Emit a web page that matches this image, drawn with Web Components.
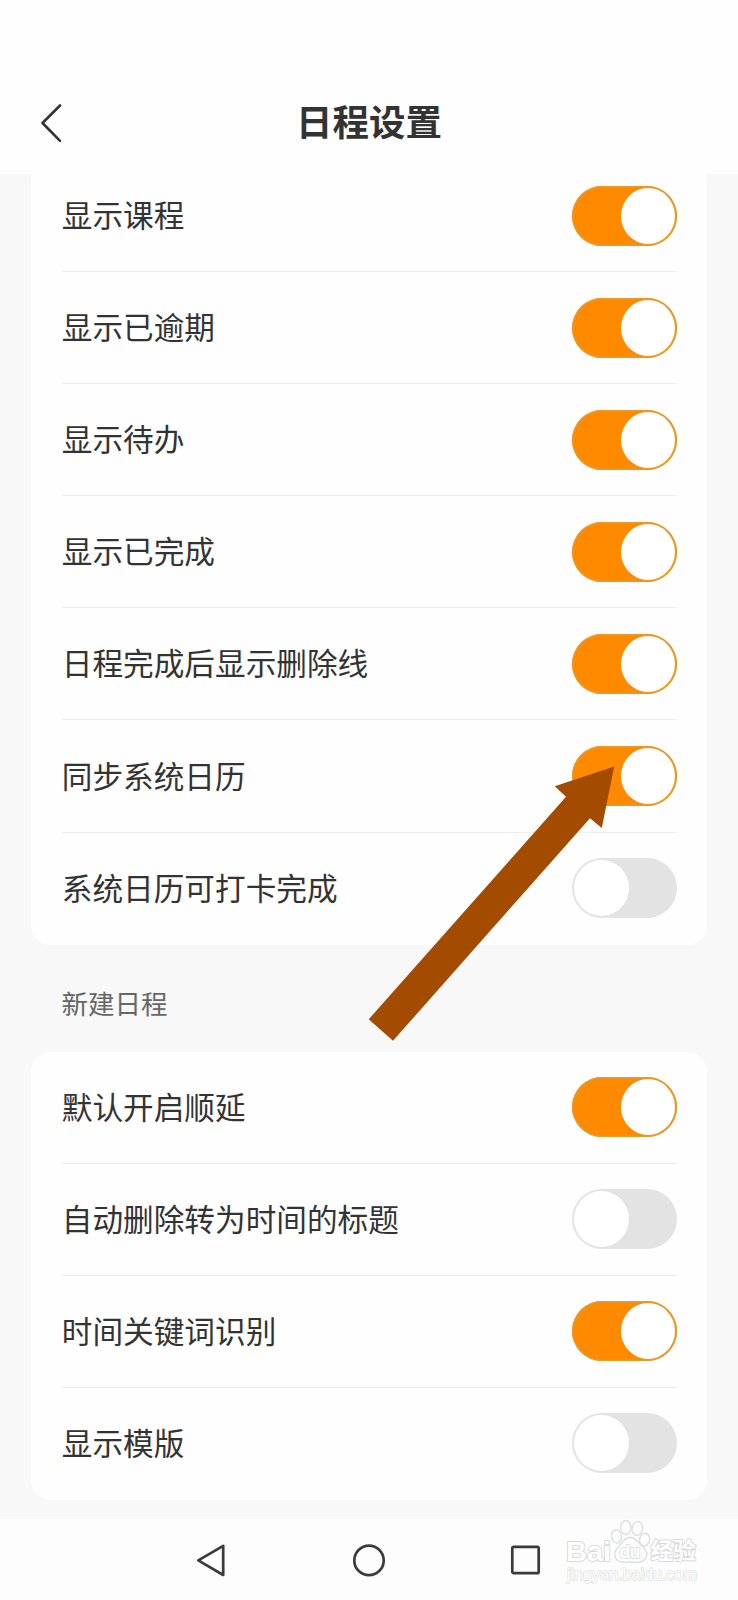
<!DOCTYPE html>
<html lang="zh-CN">
<head>
<meta charset="utf-8">
<title>日程设置</title>
<style>
html,body{margin:0;padding:0;background:#f8f8f8}
body{width:738px;height:1600px;overflow:hidden;font-family:"Noto Sans CJK SC","Liberation Sans",sans-serif;color:#333}
</style>
</head>
<body>
<schedule-page></schedule-page>
<script>
const define = (name, html, setup) => {
  const t = document.createElement('template');
  t.innerHTML = html;
  customElements.define(name, class extends HTMLElement {
    connectedCallback() {
      if (this.shadowRoot) return;
      this.attachShadow({mode: 'open'}).append(t.content.cloneNode(true));
      if (setup) setup(this, this.shadowRoot);
    }
  });
};

define('page-header', `<style>
:host{display:grid;grid-template-columns:100px 1fr 100px;align-items:center;box-sizing:border-box;height:174px;padding-top:74px;background:#fefefe;position:relative;z-index:1;flex:none}
h1{margin:0;padding-bottom:6px;text-align:center;font-size:36.5px;line-height:52px;font-weight:700;color:#333}
svg{display:block;margin-left:38px;margin-top:-3px}
</style>
<svg width="28" height="42" viewBox="0 0 28 42" fill="none" stroke="#333" stroke-width="2.6" stroke-linecap="round" stroke-linejoin="round"><path d="M22 3.5 4.5 21 22 38.8"/></svg>
<h1><slot></slot></h1>`);

define('toggle-switch', `<style>
:host{display:flex;box-sizing:border-box;width:105px;height:60px;border-radius:30px;padding:2px;background:#e3e3e3;flex:none}
:host([on]){background:#ff8a00;justify-content:flex-end;box-shadow:inset 0 0 0 1.5px #e59a2c}
i{display:block;width:54.5px;height:56px;border-radius:50%;background:#fff}
</style><i></i>`);

define('setting-row', `<style>
:host{display:flex;align-items:center;justify-content:space-between;box-sizing:border-box;height:112.1px;border-bottom:1.5px solid #eee;font-size:30.65px;line-height:44px;color:#333;white-space:nowrap}
:host(:last-child){border-bottom-color:transparent}
span{padding:0 0 3px .8px}
</style><span><slot></slot></span><toggle-switch></toggle-switch>`, (el, root) => {
  if (el.hasAttribute('on')) root.querySelector('toggle-switch').setAttribute('on', '');
});

define('setting-card', `<style>
:host{display:block;background:#fefefe;border-radius:20px;margin:0 31px;padding:0 30px}
</style><slot></slot>`);

define('section-label', `<style>
:host{display:flex;align-items:center;height:107px;padding-left:61.6px;box-sizing:border-box;font-size:26.5px;line-height:40px;color:#666;padding-top:9px}
</style><slot></slot>`);

define('pointer-arrow', `<style>
:host{display:block;position:absolute;left:368px;top:766px;z-index:2}svg{display:block}
</style>
<svg width="248" height="276" viewBox="368 766 248 276"><path fill="#a34c00" d="M614.2 766.5 554.7 786.3 566 796.8 368.7 1019.3 393 1040.8 590 818.2 601.8 828Z"/></svg>`);

define('brand-mark', `<style>
:host{display:block;position:absolute;left:560px;top:1514px}svg{display:block}
text{fill:#fff;stroke:#d9d9d9;stroke-width:2;paint-order:stroke;stroke-linejoin:round}
</style>
<svg width="150" height="76" viewBox="560 1514 150 76">
<g fill="#fdfdfd" stroke="#dcdcdc" stroke-width="1.3">
<ellipse cx="616.5" cy="1536.5" rx="5" ry="6.6" transform="rotate(-8 616.5 1536.5)"/>
<ellipse cx="625.8" cy="1527.5" rx="5.1" ry="7"/>
<ellipse cx="637.3" cy="1528.5" rx="5.2" ry="7" transform="rotate(12 637.3 1528.5)"/>
<ellipse cx="644.6" cy="1539.5" rx="5" ry="6.4" transform="rotate(8 644.6 1539.5)"/>
<path d="M629.5 1537.5c-5 0-6.5 4.5-9.5 7.5-3.5 3.3-5.5 5.8-5.2 10 .4 5 4.4 7.8 9.2 7.3 4-.4 7.5-.4 11.5 0 5.8.6 10.5-2 11.3-7.3.6-4-2-6.8-5.6-10-3.6-3.2-6-7.5-11.7-7.5Z"/>
</g>
<g font-family="Liberation Sans, sans-serif">
<text x="566" y="1560.8" font-size="28.5" font-weight="700" textLength="45" lengthAdjust="spacingAndGlyphs">Bai</text>
<text x="619.5" y="1558" font-size="18" font-weight="700" textLength="21" style="stroke-width:1.5">du</text>
<text x="567" y="1579.8" font-size="16" textLength="130" lengthAdjust="spacingAndGlyphs" style="fill:#fdfdfd;stroke:#e1e1e1;stroke-width:1.3">jingyan.baidu.com</text>
</g>
<text x="650.5" y="1559" font-family="Noto Sans CJK SC, sans-serif" font-size="22.8" font-weight="700">经验</text>
</svg>`);

define('system-nav', `<style>
:host{display:flex;justify-content:space-between;align-items:center;height:81px;box-sizing:border-box;padding:1px 196px 0;background:#fdfdfd;margin-top:auto;flex:none}
svg{display:block}
</style>
<svg width="32" height="36" viewBox="0 0 32 36" fill="none" stroke="#3b3b3b" stroke-width="2.7" stroke-linejoin="round"><path d="M27.2 3.8V33L2.3 18.4Z"/></svg>
<svg width="36" height="36" viewBox="0 0 36 36" fill="none" stroke="#3b3b3b" stroke-width="2.7"><circle cx="18" cy="18.4" r="14.7"/></svg>
<svg width="32" height="36" viewBox="0 0 32 36" fill="none" stroke="#3b3b3b" stroke-width="2.7"><rect x="2.3" y="4.8" width="26.4" height="26.4" rx="1.5"/></svg>`);

define('schedule-page', `<style>
:host{display:flex;flex-direction:column;width:738px;height:1600px;position:relative;overflow:hidden;background:#f8f8f8}
main{margin-top:-14px}
</style>
<page-header>日程设置</page-header>
<main>
<setting-card>
<setting-row on>显示课程</setting-row>
<setting-row on>显示已逾期</setting-row>
<setting-row on>显示待办</setting-row>
<setting-row on>显示已完成</setting-row>
<setting-row on>日程完成后显示删除线</setting-row>
<setting-row on>同步系统日历</setting-row>
<setting-row>系统日历可打卡完成</setting-row>
</setting-card>
<section-label>新建日程</section-label>
<setting-card>
<setting-row on>默认开启顺延</setting-row>
<setting-row>自动删除转为时间的标题</setting-row>
<setting-row on>时间关键词识别</setting-row>
<setting-row>显示模版</setting-row>
</setting-card>
</main>
<system-nav></system-nav>
<pointer-arrow></pointer-arrow>
<brand-mark></brand-mark>`);
</script>
</body>
</html>
